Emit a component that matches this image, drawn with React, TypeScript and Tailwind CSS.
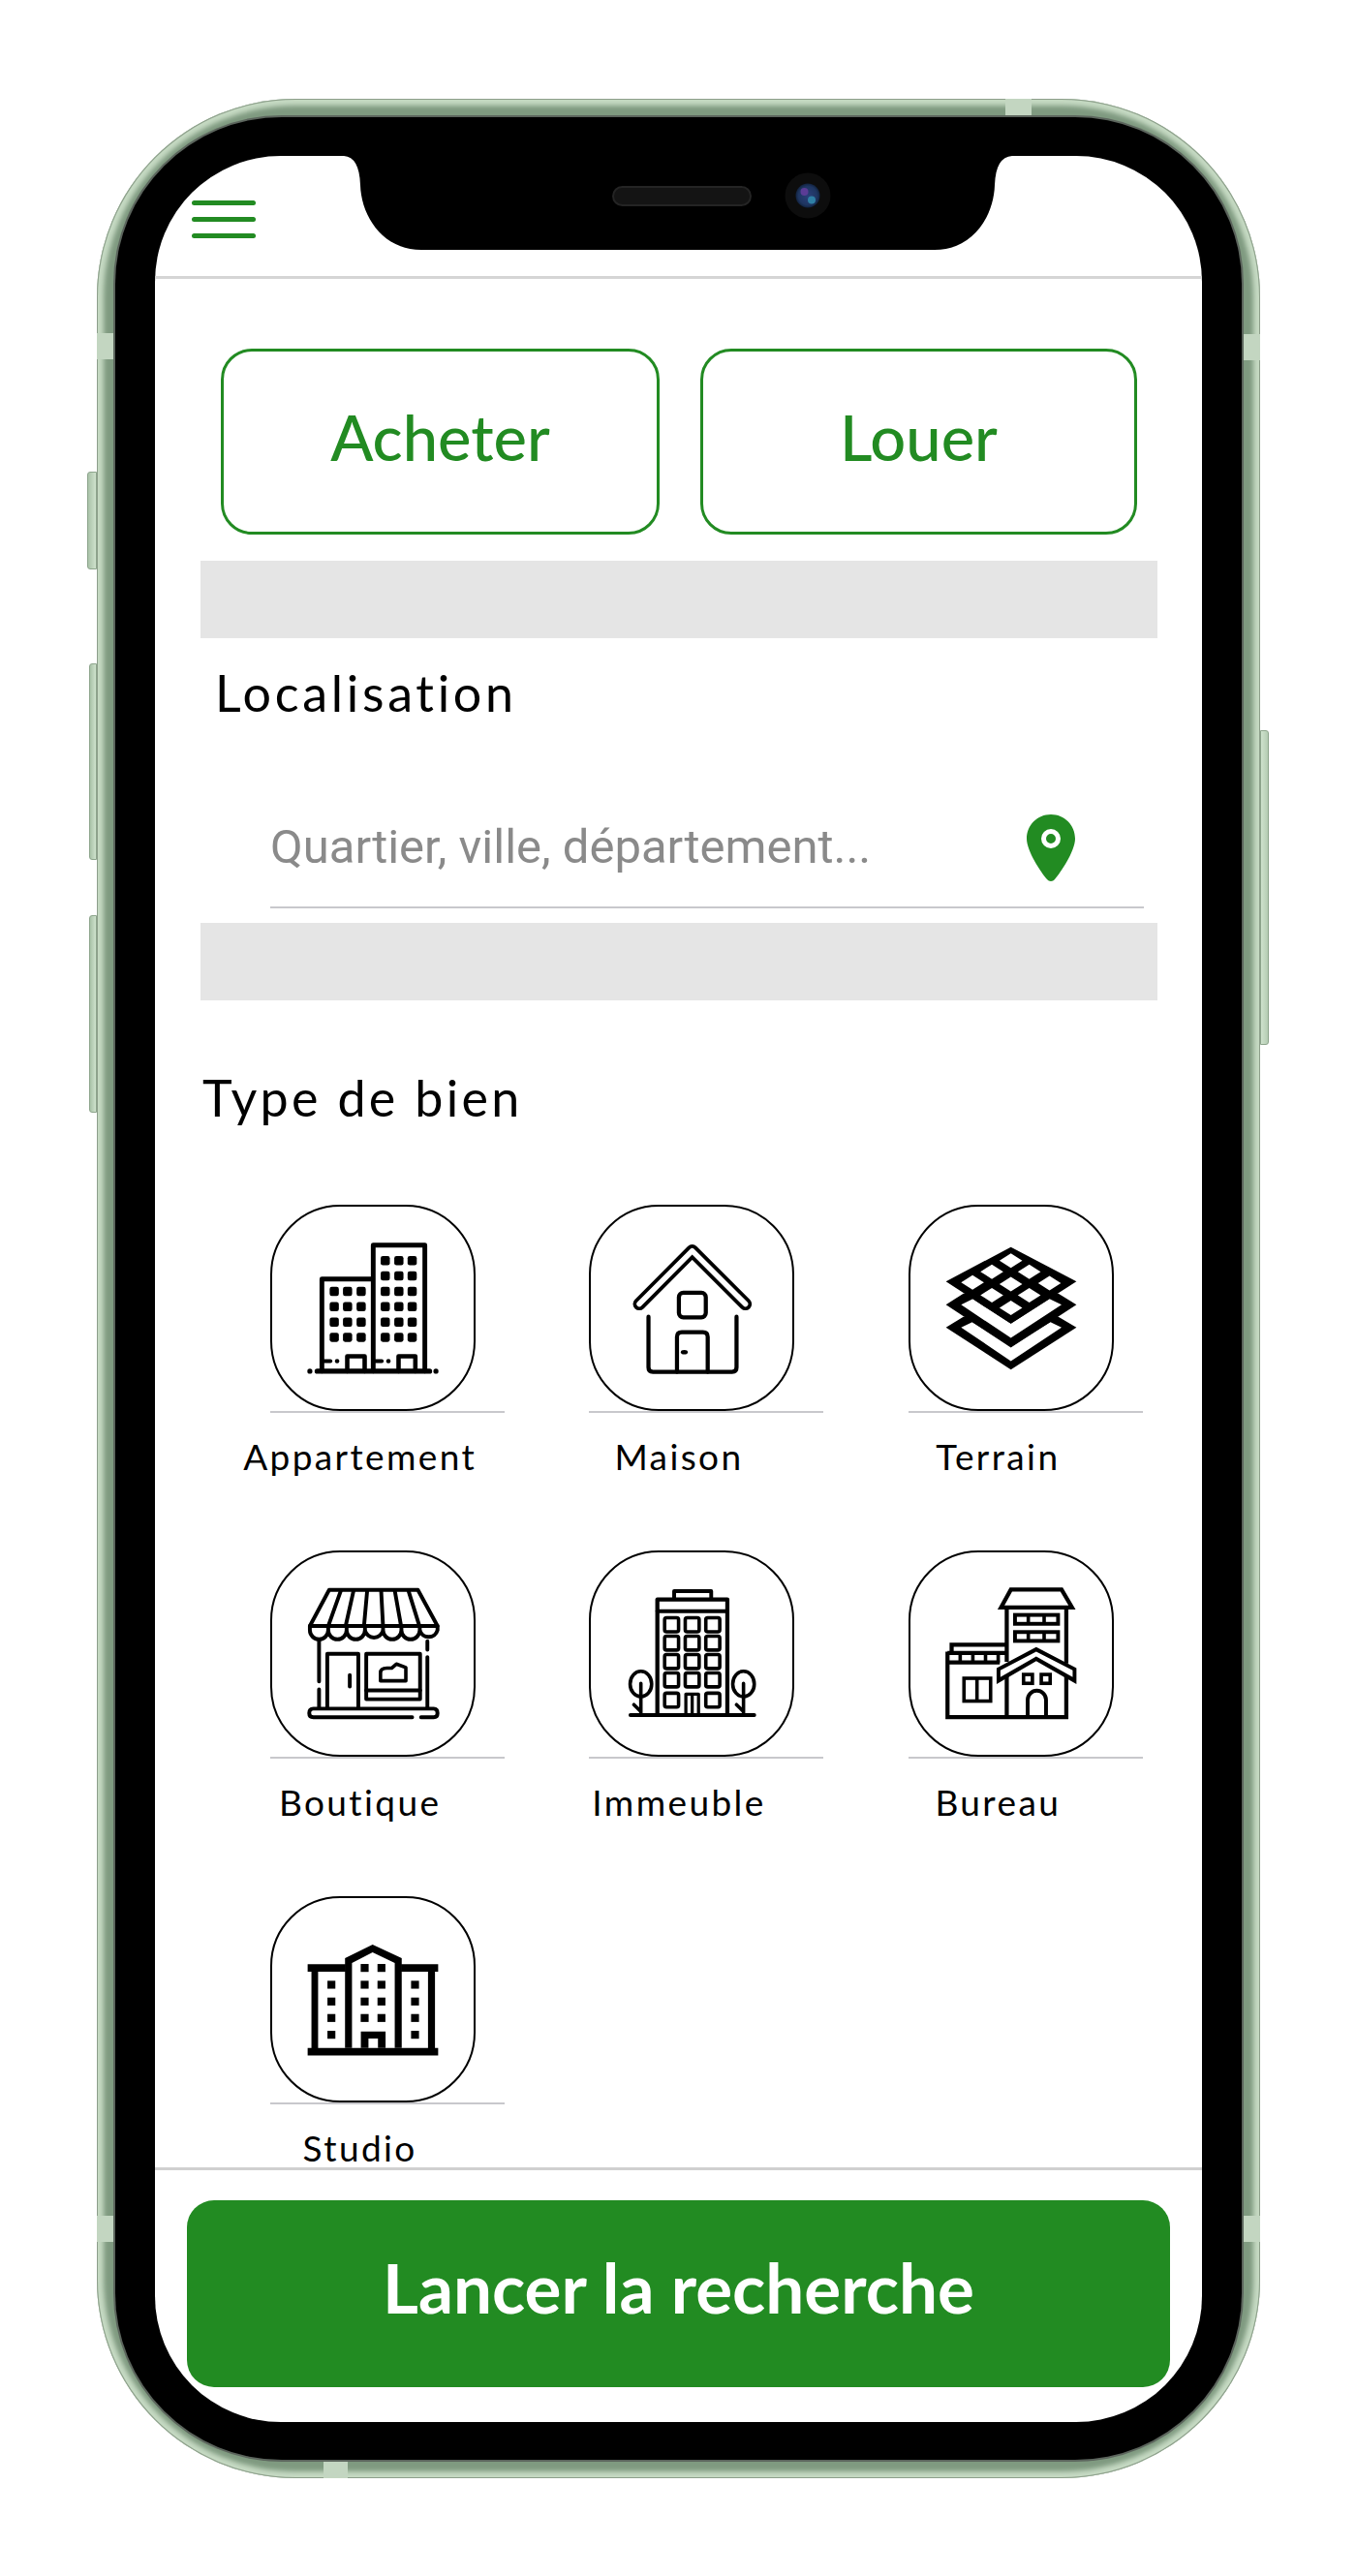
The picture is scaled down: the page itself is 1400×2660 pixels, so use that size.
import type { ReactNode } from "react";

const Line = ({ d, w = 13 }: { d: string; w?: number }) => (
	<path d={d} fill="none" stroke="#000" strokeWidth={w} strokeLinecap="round" strokeLinejoin="round" />
);

const Dots = ({ xs, ys, s = 29, r = 7 }: { xs: number[]; ys: number[]; s?: number; r?: number }) => (
	<>
		{ys.map((y) =>
			xs.map((x) => <rect key={`${x}-${y}`} x={x - s / 2} y={y - s / 2} width={s} height={s} rx={r} fill="#000" />),
		)}
	</>
);

// all icons are drawn in the coordinates of a 810x810 crop around the tile
const AppartementIcon = () => (
	<svg viewBox="88 72 636 636" className="w-full h-full">
		<Line d="M245 590V299H405" w={15} />
		<Line d="M407 590V192H570V590" w={15} />
		<Line d="M230 590H585" w={16} />
		<circle cx="207" cy="590" r="8" />
		<circle cx="605" cy="590" r="8" />
		<Dots xs={[284, 326, 369]} ys={[338, 386, 435, 483]} />
		<Dots xs={[445, 488, 530]} ys={[241, 289, 338, 386, 435, 483]} />
		<Line d="M325 590V543H380V590" w={14} />
		<Line d="M487 590V543H540V590" w={14} />
		<Line d="M252 558H272" w={12} />
		<circle cx="293" cy="558" r="7" />
		<Line d="M414 558H434" w={12} />
		<circle cx="455" cy="558" r="7" />
	</svg>
);

const MaisonIcon = () => (
	<svg viewBox="82 72 636 636" className="w-full h-full">
		<path d="M235 378L402 210L570 378" fill="none" stroke="#000" strokeWidth="40" strokeLinecap="round" strokeLinejoin="round" />
		<path d="M235 378L402 210L570 378" fill="none" stroke="#fff" strokeWidth="17" strokeLinecap="round" strokeLinejoin="round" />
		<Line d="M264 418V578Q264 592 278 592H528Q542 592 542 578V418" />
		<rect x="360" y="342" width="85" height="78" rx="14" fill="none" stroke="#000" strokeWidth="13" />
		<Line d="M354 592V482Q354 467 369 467H436Q451 467 451 482V592" />
		<ellipse cx="377" cy="530" rx="11" ry="7" />
	</svg>
);

const TerrainIcon = () => (
	<svg viewBox="88 72 636 636" className="w-full h-full">
		<polygon points="200,452 255,418 555,418 612,452 405,585" />
		<polygon points="248,452 283,435 405,513 530,435 565,452 405,558" fill="#fff" />
		<polygon points="200,380 255,345 555,345 612,380 405,515" />
		<polygon points="248,380 285,362 405,440 527,362 565,380 405,485" fill="#fff" />
		<polygon points="405,198 612,307 405,440 200,307" />
		{[
			[405, 241],
			[345, 276],
			[463, 276],
			[284, 310],
			[405, 315],
			[527, 312],
			[345, 350],
			[463, 350],
			[405, 390],
		].map(([x, y]) => (
			<polygon key={`${x}-${y}`} points={`${x},${y - 23} ${x + 36},${y} ${x},${y + 23} ${x - 36},${y}`} fill="#fff" />
		))}
	</svg>
);

const BoutiqueIcon = () => (
	<svg viewBox="88 66 636 636" className="w-full h-full">
		<Line d="M207 297L268 183H548L610 297Z" w={12} />
		{["M305 185L265 297", "M345 185L320 297", "M388 185L378 297", "M432 185L438 297", "M475 185L495 297", "M518 185L553 297"].map((d) => (
			<Line key={d} d={d} w={12} />
		))}
		<Line
			d="M207 297V310A29 29 0 0 0 265 310V297M265 310A29 29 0 0 0 323 310V297M323 310A29 29 0 0 0 381 310V297M381 310A29 29 0 0 0 438 310V297M438 310A29 29 0 0 0 496 310V297M496 310A29 29 0 0 0 554 310V297M554 310A29 29 0 0 0 610 310V297"
			w={12}
		/>
		<Line d="M236 345V472M236 497V555M578 345V372M578 395V555" w={12} />
		<Line d="M262 555V385H360V555" w={12} />
		<Line d="M333 452V488" w={12} />
		<rect x="385" y="385" width="170" height="143" fill="none" stroke="#000" strokeWidth="12" strokeLinejoin="round" />
		<Line d="M385 500H555" w={12} />
		<Line d="M430 470V445Q430 430 450 430H465L480 417L510 428V470Z" w={11} />
		<Line d="M530 585H218Q205 585 205 572Q205 558 218 558H598Q610 558 610 572Q610 585 598 585H558" w={12} />
	</svg>
);

const ImmeubleIcon = () => (
	<svg viewBox="82 66 636 636" className="w-full h-full">
		<Line d="M345 210V187H462V210" w={12} />
		<Line d="M292 578V213H513V578" w={13} />
		<Line d="M292 250H513" w={12} />
		{[293, 351, 409, 467, 531].map((y) =>
			[337, 402, 467]
				.filter((x) => !(x === 402 && y === 531))
				.map((x) => (
					<rect key={`${x}-${y}`} x={x - 22} y={y - 22} width="44" height="44" rx="6" fill="none" stroke="#000" strokeWidth="11" />
				)),
		)}
		<Line d="M382 575V512H422V575M402 515V575" w={10} />
		<Line d="M207 578H598" w={12} />
		<ellipse cx="240" cy="480" rx="34" ry="40" fill="none" stroke="#000" strokeWidth="11" />
		<ellipse cx="564" cy="480" rx="34" ry="40" fill="none" stroke="#000" strokeWidth="11" />
		<Line d="M240 478V575M218 545L238 565M564 478V575M542 545L562 565" w={11} />
	</svg>
);

const BureauIcon = () => (
	<svg viewBox="88 66 636 636" className="w-full h-full">
		<path d="M405 182H565L598 238H374Z" fill="none" stroke="#000" strokeWidth="13" />
		<path d="M392 238V410M580 238V415" stroke="#000" strokeWidth="13" />
		<rect x="418" y="262" width="136" height="28" fill="none" stroke="#000" strokeWidth="12" />
		<rect x="418" y="316" width="136" height="28" fill="none" stroke="#000" strokeWidth="12" />
		<path d="M460 262V290M510 262V290M460 316V344M510 316V344" stroke="#000" strokeWidth="11" />
		<path d="M205 378V585H580V440M205 412H370M205 382H390M218 378V356H388" fill="none" stroke="#000" strokeWidth="13" />
		<path d="M245 382V412M285 382V412M325 382V412M365 382V412" stroke="#000" strokeWidth="11" />
		<polygon points="360,430 485,363 612,430 612,480 485,408 360,480" />
		<polygon points="372,437 485,378 600,437 600,458 485,393 372,458" fill="#fff" />
		<path d="M392 452V585" stroke="#000" strokeWidth="13" />
		<rect x="445" y="450" width="28" height="28" fill="none" stroke="#000" strokeWidth="11" />
		<rect x="501" y="450" width="28" height="28" fill="none" stroke="#000" strokeWidth="11" />
		<path d="M458 585V530A28 28 0 0 1 516 530V585" fill="none" stroke="#000" strokeWidth="12" />
		<rect x="257" y="462" width="84" height="72" fill="none" stroke="#000" strokeWidth="11" />
		<path d="M298 462V534" stroke="#000" strokeWidth="11" />
	</svg>
);

const StudioIcon = () => (
	<svg viewBox="88 55 636 636" className="w-full h-full">
		<path d="M200 262H320V286H200ZM495 262H612V286H495ZM200 527H612V550H200ZM212 280H233V530H212ZM580 280H602V530H580Z" />
		<path d="M318 527V243L405 200L497 243V527H475V258L405 225L340 258V527Z" />
		<Dots xs={[275]} ys={[327, 380, 432, 485]} s={25} r={0} />
		<Dots xs={[539]} ys={[327, 380, 432, 485]} s={25} r={0} />
		<Dots xs={[380, 433]} ys={[274, 327, 380, 432]} s={25} r={0} />
		<path fillRule="evenodd" d="M368 475H446V527H368ZM392 497V527H422V497Z" />
	</svg>
);

const propertyTypes: { label: string; icon: ReactNode }[] = [
	{ label: "Appartement", icon: <AppartementIcon /> },
	{ label: "Maison", icon: <MaisonIcon /> },
	{ label: "Terrain", icon: <TerrainIcon /> },
	{ label: "Boutique", icon: <BoutiqueIcon /> },
	{ label: "Immeuble", icon: <ImmeubleIcon /> },
	{ label: "Bureau", icon: <BureauIcon /> },
	{ label: "Studio", icon: <StudioIcon /> },
];

const TypeTile = ({ label, icon }: { label: string; icon: ReactNode }) => (
	<div>
		<div className="ml-[72px] w-[242px]">
			<div className="w-[212px] h-[213px] rounded-[72px] border-2 border-black bg-white">{icon}</div>
			<div className="h-[2px] bg-[#c8c8cc]" />
		</div>
		<div className="mt-[27px] text-center text-[37px] leading-[36px] tracking-[2.4px] text-black">{label}</div>
	</div>
);

const Notch = () => (
	<>
		<svg viewBox="0 0 690 97" className="absolute left-[195px] top-0 w-[690px] h-[97px]">
			<path d="M0 0H690Q673 1 672 30C671 62 650 97 610 97H80C40 97 18 62 17 30Q16 1 0 0Z" fill="#000" />
		</svg>
		<div className="absolute left-[472px] top-[31px] w-[144px] h-[21px] rounded-full bg-[#141414] border-2 border-[#242424]" />
		<svg viewBox="0 0 48 48" className="absolute left-[650px] top-[17px] w-[48px] h-[48px]">
			<defs>
				<radialGradient id="lens" cx="50%" cy="50%" r="55%">
					<stop offset="0%" stopColor="#2b3f7a" />
					<stop offset="70%" stopColor="#1e3560" />
					<stop offset="100%" stopColor="#0c1a30" />
				</radialGradient>
			</defs>
			<circle cx="24" cy="24" r="23.5" fill="#0d0d0d" />
			<circle cx="24" cy="24" r="12.5" fill="url(#lens)" />
			<circle cx="20.5" cy="20" r="4" fill="#5b3c96" />
			<circle cx="28" cy="28.5" r="4" fill="#2f7fa4" />
		</svg>
	</>
);

const SideButton = ({ className }: { className: string }) => (
	<div className={`absolute rounded-l-[3px] border border-[#8da58c] bg-gradient-to-r from-[#a9c2a8] to-[#cfe2cd] ${className}`} />
);

const Antenna = ({ className }: { className: string }) => <div className={`absolute bg-[#c3d6c1] ${className}`} />;

export default function App() {
	return (
		<div className="w-[1400px] h-[2660px] bg-white pt-[102px] pl-[100px] font-['Lato',sans-serif]">
			<div className="relative w-[1201px] h-[2457px] p-[19px] rounded-[205px] bg-[#7f9a80] shadow-[inset_0_0_0_1px_#8d9f8b,inset_0_0_5px_7px_#c6dac3]">
				<SideButton className="left-[-10px] top-[385px] w-[10px] h-[101px]" />
				<SideButton className="left-[-8px] top-[583px] w-[8px] h-[203px]" />
				<SideButton className="left-[-8px] top-[843px] w-[8px] h-[204px]" />
				<div className="absolute left-[1201px] top-[652px] w-[9px] h-[325px] rounded-r-[3px] border border-[#8da58c] bg-gradient-to-r from-[#cfe2cd] to-[#b4ccb3]" />
				<Antenna className="left-0 top-[242px] w-[19px] h-[27px]" />
				<Antenna className="left-0 top-[2186px] w-[19px] h-[27px]" />
				<Antenna className="right-0 top-[243px] w-[19px] h-[27px]" />
				<Antenna className="right-0 top-[2186px] w-[19px] h-[27px]" />
				<Antenna className="left-[938px] top-0 w-[27px] h-[19px]" />
				<Antenna className="left-[234px] bottom-0 w-[25px] h-[19px]" />
				<div className="relative w-full h-full pt-[40px] pb-[39px] px-[41px] rounded-[172px] bg-black shadow-[0_0_0_2px_#5c655d]">
					<div className="relative w-full h-full rounded-[130px] bg-white overflow-hidden flex flex-col">
						<header className="shrink-0 h-[127px] border-b-[3px] border-[#d5d5d5] pl-[38px] pt-[46px]">
							<div className="flex flex-col gap-[12px] w-[66px]">
								<span className="h-[5px] rounded-full bg-[#228b22]" />
								<span className="h-[5px] rounded-full bg-[#228b22]" />
								<span className="h-[5px] rounded-full bg-[#228b22]" />
							</div>
						</header>

						<main className="flex-1 min-h-0 pl-[47px] pr-[46px]">
							<div className="grid grid-cols-[453px_451px] gap-[42px] ml-[21px] mt-[72px]">
								{["Acheter", "Louer"].map((mode) => (
									<button
										key={mode}
										className="h-[192px] pb-[8px] rounded-[32px] border-[3px] border-[#228b22] text-[65px] font-medium text-[#228b22]"
									>
										{mode}
									</button>
								))}
							</div>

							<div className="h-[80px] mt-[27px] bg-[#e5e5e5]" />
							<h2 className="ml-[15px] mt-[26px] text-[52px] leading-[60px] tracking-[3.7px] text-black">Localisation</h2>
							<div className="flex items-center ml-[72px] mr-[14px] h-[116px] pb-[8px] mt-[77px] border-b-2 border-[#c8c8cc]">
								<input
									placeholder="Quartier, ville, département..."
									className="flex-1 font-['Roboto',sans-serif] text-[49px] outline-none placeholder:text-[#8a8a8a]"
								/>
								<svg viewBox="0 0 50 69" className="w-[50px] h-[69px] mr-[71px]">
									<path
										d="M25 0C11 0 0 11 0 25C0 38 15 60 21 67C23 69.500 27 69.500 29 67C35 60 50 38 50 25C50 11 39 0 25 0Z"
										fill="#228b22"
									/>
									<circle cx="25" cy="25" r="7.500" fill="none" stroke="#fff" strokeWidth="5" />
								</svg>
							</div>
							<div className="h-[80px] mt-[15px] bg-[#e5e5e5]" />

							<h2 className="ml-[2px] mt-[70px] text-[52px] leading-[60px] tracking-[3.3px] text-black">Type de bien</h2>
							<div className="grid grid-cols-3 gap-y-[79px] mt-[81px]">
								{propertyTypes.map((type) => (
									<TypeTile key={type.label} label={type.label} icon={type.icon} />
								))}
							</div>
						</main>

						<footer className="shrink-0 h-[263px] border-t-[3px] border-[#d0d0d0] px-[33px] pt-[31px]">
							<button className="w-full h-[193px] pb-[12px] rounded-[28px] bg-[#228b22] text-[71px] font-bold text-white">
								Lancer la recherche
							</button>
						</footer>

						<Notch />
					</div>
				</div>
			</div>
		</div>
	);
}
